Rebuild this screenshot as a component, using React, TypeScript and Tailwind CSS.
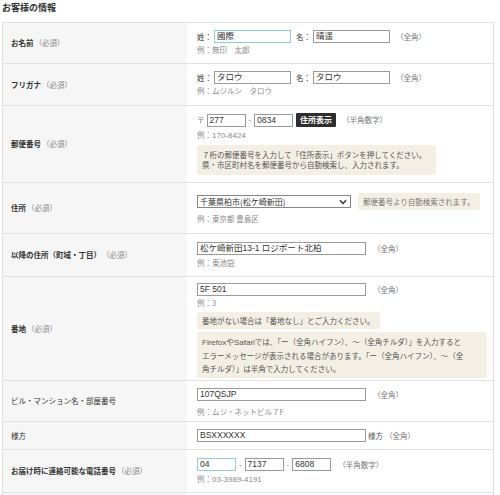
import React from "react";

const JP = "font-['Noto_Sans_CJK_JP','Noto_Sans',sans-serif]";

function Inp({ w, v, blue }: { w: string; v: string; blue?: boolean }) {
  return (
    <span
      className={`inline-flex items-center h-[13px] ${w} border ${
        blue ? "border-[#8ccbe0]" : "border-[#9a9a9a]"
      } bg-white px-[2px] text-[8.5px] leading-[11px] text-[#333] overflow-hidden whitespace-nowrap font-['Liberation_Sans','Noto_Sans_CJK_JP',sans-serif]`}
    >
      {v}
    </span>
  );
}

function Ex({ children, cls = "mt-[2px]" }: { children: React.ReactNode; cls?: string }) {
  return <div className={`${cls} text-[7.5px] leading-[10px] text-[#8a8a8a]`}>{children}</div>;
}

function Note({ children }: { children: React.ReactNode }) {
  return <span className="text-[7.5px] leading-[10px] text-[#777]">{children}</span>;
}

function Row({
  label,
  req,
  bold = true,
  pad,
  children,
}: {
  label: string;
  req?: boolean;
  bold?: boolean;
  pad: string;
  children: React.ReactNode;
}) {
  return (
    <div className="flex border-b border-[#e2e2e2]">
      <div className="w-[184px] shrink-0 bg-[#f6f6f6] flex items-center pl-[8px]">
        <span className={`text-[7.5px] text-[#333] ${bold ? "font-bold" : ""}`}>{label}</span>
        {req && <span className="text-[7.5px] text-[#888] ml-[1px]">（必須）</span>}
      </div>
      <div className={`flex-1 pl-[10px] ${pad}`}>{children}</div>
    </div>
  );
}

export default function App() {
  return (
    <div className={`${JP} bg-white w-[500px] h-[495px] overflow-hidden text-[#333] text-[7.5px] leading-[10px]`}>
      <div className="pl-[2px] pt-[2px] h-[22px] text-[9px] font-bold leading-[12px]">お客様の情報</div>
      <div className="ml-[2px] w-[492px] border-t border-l border-r border-[#e2e2e2]">
        <Row label="お名前" req pad="pt-[7px] pb-[8px]">
          <div className="flex items-center">
            <span className="mr-[2px]">姓：</span>
            <Inp w="w-[77px]" v="國際" blue />
            <span className="ml-[5px] mr-[2px]">名：</span>
            <Inp w="w-[77px]" v="晴遥" />
            <span className="ml-[6px]"><Note>（全角）</Note></span>
          </div>
          <Ex>例：無印　太郎</Ex>
        </Row>
        <Row label="フリガナ" req pad="pt-[7px] pb-[9px]">
          <div className="flex items-center">
            <span className="mr-[2px]">姓：</span>
            <Inp w="w-[77px]" v="タロウ" />
            <span className="ml-[5px] mr-[2px]">名：</span>
            <Inp w="w-[77px]" v="タロウ" />
            <span className="ml-[6px]"><Note>（全角）</Note></span>
          </div>
          <Ex>例：ムジルシ　タロウ</Ex>
        </Row>
        <Row label="郵便番号" req pad="pt-[7px] pb-[7px]">
          <div className="flex items-center h-[14px]">
            <span className="mr-[2px] text-[#777]">〒</span>
            <Inp w="w-[39px]" v="277" />
            <span className="mx-[3px] text-[#777]">-</span>
            <Inp w="w-[39px]" v="0834" />
            <span className="ml-[3px] h-[14px] px-[4px] bg-[#2e2e2e] text-white font-bold text-[8px] leading-[14px] rounded-[1px]">
              住所表示
            </span>
            <span className="ml-[6px]"><Note>（半角数字）</Note></span>
          </div>
          <Ex cls="mt-[3px]">
            例：<span className="font-['Liberation_Sans',sans-serif] text-[8px]">170-8424</span>
          </Ex>
          <div className="mt-[4px] w-[239px] bg-[#f3efe5] rounded-[3px] px-[5px] py-[5px] text-[7.5px] leading-[10px] text-[#555] whitespace-nowrap">
            ７桁の郵便番号を入力して「住所表示」ボタンを押してください。
            <br />
            県・市区町村名を郵便番号から自動検索し、入力されます。
          </div>
        </Row>
        <Row label="住所" req pad="pt-[10px] pb-[9px]">
          <div className="flex items-center h-[17px]">
            <span className="inline-flex items-center justify-between w-[154px] h-[13px] border border-[#888] bg-white pl-[2px] pr-[3px] text-[8px] text-[#333]">
              <span>千葉県柏市(松ケ崎新田)</span>
              <svg width="8" height="6" viewBox="0 0 8 6">
                <path d="M1 1.2 L4 4.4 L7 1.2" fill="none" stroke="#333" strokeWidth="1.4" />
              </svg>
            </span>
            <span className="ml-[7px] h-[17px] px-[5px] bg-[#f3efe5] rounded-[3px] text-[7.5px] leading-[17px] text-[#777]">
              郵便番号より自動検索されます。
            </span>
          </div>
          <Ex cls="mt-[4px]">例：東京都 豊島区</Ex>
        </Row>
        <Row label="以降の住所（町域・丁目）" req pad="pt-[8px] pb-[8px]">
          <div className="flex items-center">
            <Inp w="w-[169px]" v="松ケ崎新田13-1 ロジポート北柏" />
            <span className="ml-[7px]"><Note>（全角）</Note></span>
          </div>
          <Ex cls="mt-[3px]">例：東池袋</Ex>
        </Row>
        <Row label="番地" req pad="pt-[6px] pb-[2px]">
          <div className="flex items-center">
            <Inp w="w-[169px]" v="5F 501" />
            <span className="ml-[7px]"><Note>（全角）</Note></span>
          </div>
          <Ex cls="mt-[2px]">例：3</Ex>
          <div className="mt-[4px] inline-block h-[17px] px-[5px] bg-[#f3efe5] rounded-[3px] text-[7.5px] leading-[17px] text-[#555]">
            番地がない場合は「番地なし」とご入力ください。
          </div>
          <div className="mt-[3px] w-[290px] bg-[#f3efe5] rounded-[3px] px-[5px] py-[3px] text-[7.5px] leading-[13px] text-[#555] whitespace-nowrap">
            <span className="font-['Liberation_Sans',sans-serif] text-[8px]">Firefox</span>や
            <span className="font-['Liberation_Sans',sans-serif] text-[8px]">Safari</span>
            では、「ー（全角ハイフン）、～（全角チルダ）」を入力すると
            <br />
            エラーメッセージが表示される場合があります。「ー（全角ハイフン）、～（全
            <br />
            角チルダ）」は半角で入力してください。
          </div>
        </Row>
        <Row label="ビル・マンション名・部屋番号" bold={false} pad="pt-[7px] pb-[4px]">
          <div className="flex items-center">
            <Inp w="w-[169px]" v="107QSJP" />
            <span className="ml-[7px]"><Note>（全角）</Note></span>
          </div>
          <Ex cls="mt-[6px]">例：ムジ・ネットビル７F</Ex>
        </Row>
        <Row label="様方" bold={false} pad="pt-[7px] pb-[7px]">
          <div className="flex items-center">
            <Inp w="w-[169px]" v="BSXXXXXX" />
            <span className="ml-[2px] text-[#555]">様方</span>
            <span className="ml-[2px]"><Note>（全角）</Note></span>
          </div>
        </Row>
        <Row label="お届け時に連絡可能な電話番号" req pad="pt-[8px] pb-[7px]">
          <div className="flex items-center">
            <Inp w="w-[39px]" v="04" blue />
            <span className="mx-[3px] text-[#777]">-</span>
            <Inp w="w-[39px]" v="7137" />
            <span className="mx-[3px] text-[#777]">-</span>
            <Inp w="w-[39px]" v="6808" />
            <span className="ml-[7px]"><Note>（半角数字）</Note></span>
          </div>
          <Ex cls="mt-[3px]">
            例：<span className="font-['Liberation_Sans',sans-serif] text-[8px]">03-3989-4191</span>
          </Ex>
        </Row>
        <Row label="" pad="h-[40px]">
          <div />
        </Row>
      </div>
    </div>
  );
}
